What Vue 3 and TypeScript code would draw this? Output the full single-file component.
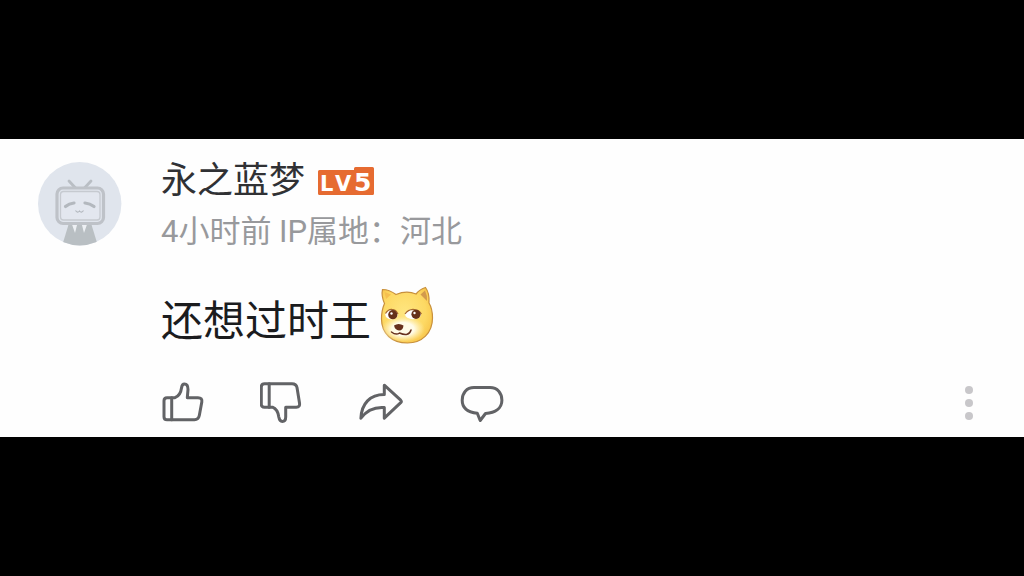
<script setup lang="ts">
interface Action {
  label: string
  paths: string[]
}

const comment = {
  author: '永之蓝梦',
  meta: '4小时前 IP属地：河北',
  text: '还想过时王',
}

const actions: Action[] = [
  {
    label: '点赞',
    paths: [
      'M6 17.7H14C18 16 20 12 20.5 8C20.8 5.5 21.8 4 23.5 4C26 4 27 6.5 27 9.500L26.300 17.700H37C40 17.700 41.300 19.300 40.800 22L38.300 35.500C37.700 38.500 36.500 39.700 33.500 39.700H6C4 39.700 3 38.700 3 36.700V20.700C3 18.700 4 17.700 6 17.700Z',
      'M10.700 17.700V39.700',
    ],
  },
  {
    label: '点踩',
    paths: [
      'M4.500 3.700H32C35 3.700 36.400 4.700 37 7.500L39.500 23C39.900 25.800 39 27.200 36.300 27.200H25.700V37C25.700 40 24.500 41.400 22.300 41.400C20 41.400 19.300 39.800 18.800 37C18 31.500 16 28.500 12.500 27.200H4.500C2.300 27.200 1.300 26.200 1.300 24V7C1.300 4.800 2.300 3.700 4.500 3.700Z',
      'M9.200 3.700V27.200',
    ],
  },
  {
    label: '分享',
    paths: [
      'M25.300 5.200L41.700 20.200Q42.900 21.400 41.700 22.600L25.300 38.200V27.600C15 26.800 8 30 1.900 38.200C2.600 23.500 11 14.500 25.300 14.500Z',
    ],
  },
  {
    label: '回复',
    paths: [
      'M16 7.500H32C39.500 7.500 43.900 13 43.900 20.300C43.900 28 37.500 32.800 27.500 33.500L22.200 40.500L19.300 33.300C9.500 32.300 4.200 27.500 4.200 20.300C4.200 13 8.500 7.500 16 7.500Z',
    ],
  },
]
</script>

<template>
  <main class="page">
    <article class="comment">
      <svg class="avatar" viewBox="0 0 84 84" role="img" aria-label="头像">
        <defs>
          <clipPath id="avatar-clip"><circle cx="41.700" cy="41.700" r="41.700" /></clipPath>
        </defs>
        <circle cx="41.700" cy="41.700" r="41.700" fill="#e0e5ed" />
        <g clip-path="url(#avatar-clip)">
          <path d="M31 61H53L60 84H24Z" fill="#b9bfc3" />
          <path d="M33.500 61H39.500L37 71ZM43.500 61H49.500L46 71Z" fill="#edf0f4" />
          <path d="M31 19L37.500 26M53 19L46.500 26" stroke="#b9bec4" stroke-width="2.800" stroke-linecap="round" />
          <rect x="19" y="26" width="46.500" height="35.500" rx="6" fill="#e0e5ed" stroke="#bec2c8" stroke-width="3.200" />
          <rect x="22.500" y="29.500" width="39.500" height="28.500" rx="3" fill="#e3e7ef" stroke="#c6cad0" stroke-width="1.300" />
          <path d="M27.500 44.500Q31 41.500 36 41M47 41Q52 41.500 56 44.500" fill="none" stroke="#b3b8be" stroke-width="3.200" stroke-linecap="round" />
          <path d="M37.500 48.500Q39.500 51.500 41.500 49Q43.500 51.500 45.500 48.500" fill="none" stroke="#b3b8be" stroke-width="1.200" />
        </g>
      </svg>

      <div class="body">
        <header class="author">
          <span class="name">{{ comment.author }}</span>
          <svg class="level" viewBox="0 0 56 28" role="img" aria-label="LV5">
            <path d="M1.500 3H36V1.500Q36 0 37.500 0H54.500Q56 0 56 1.500V26.500Q56 28 54.500 28H1.500Q0 28 0 26.500V4.500Q0 3 1.500 3Z" fill="#e66b31" />
            <text class="level-text" x="2" y="24">L</text>
            <text class="level-text" x="17" y="24">V</text>
            <text class="level-text level-digit" x="36" y="24">5</text>
          </svg>
        </header>
        <p class="meta">{{ comment.meta }}</p>

        <div class="content">
          <p class="text">{{ comment.text }}</p>
          <svg class="emoji" viewBox="0 0 56 58" role="img" aria-label="doge">
            <defs>
              <radialGradient id="fur" cx="0.450" cy="0.450" r="0.600">
                <stop offset="0" stop-color="#ffe680" />
                <stop offset="0.700" stop-color="#fdd964" />
                <stop offset="1" stop-color="#f8c64c" />
              </radialGradient>
              <radialGradient id="muzzle">
                <stop offset="0.500" stop-color="#fffbe8" />
                <stop offset="1" stop-color="#fff0b8" stop-opacity="0" />
              </radialGradient>
            </defs>
            <path d="M3.500 3.500C8 3.500 13 5.500 17 8.500C23 6 31 5.500 37 8C39.500 5 43 2.500 46.500 1.500C49.500 5.500 50.500 10.500 50 17C52.500 21 53.500 26 53.500 32C53.500 47 43 57 28.500 57C13 57 2.500 47.500 2.500 33C2.500 27.500 3.500 22 5.500 17.500C3.500 13 2.500 8 3.500 3.500Z" fill="url(#fur)" stroke="#c8903c" stroke-width="1.200" />
            <path d="M41.500 8.500L46 4.500Q48.500 9.500 48 15Z" fill="#d39a4c" />
            <path d="M5.500 6L12 8.500L7 13Z" fill="#f6bf50" />
            <ellipse cx="24" cy="43" rx="22" ry="13" fill="url(#muzzle)" />
            <ellipse cx="12.500" cy="28.500" rx="6.200" ry="5" fill="#fff" />
            <ellipse cx="34" cy="28.300" rx="8" ry="5" fill="#fff" />
            <path d="M6.500 27.500Q9 23 13 23.300Q17 23.500 19 28M26 28Q29 23.500 34 23.300Q40 23.500 42.500 28" fill="none" stroke="#a86a2c" stroke-width="1.200" />
            <circle cx="13.800" cy="28.700" r="4.600" fill="#66301a" />
            <circle cx="37" cy="28.300" r="4.600" fill="#66301a" />
            <circle cx="12.500" cy="27.500" r="1.200" fill="#fff" />
            <circle cx="35.500" cy="27" r="1.200" fill="#fff" />
            <path d="M15 39.500Q19.500 36.500 24.500 39.500Q24 44.500 20 44.500Q16 44 15 39.500Z" fill="#67301d" />
            <path d="M12.500 46Q17 49.500 20.500 47Q30 51 32 44" fill="none" stroke="#67301d" stroke-width="1.500" stroke-linecap="round" />
          </svg>
        </div>

        <footer class="toolbar">
          <button v-for="action in actions" :key="action.label" class="action" type="button" :aria-label="action.label">
            <svg class="icon" viewBox="0 0 46 46" aria-hidden="true">
              <path v-for="d in action.paths" :key="d" :d="d" />
            </svg>
          </button>
          <button class="more" type="button" aria-label="更多">
            <svg class="dots" viewBox="0 0 10 46" aria-hidden="true">
              <circle cx="5" cy="10" r="4" />
              <circle cx="5" cy="23" r="4" />
              <circle cx="5" cy="36" r="4" />
            </svg>
          </button>
        </footer>
      </div>
    </article>
  </main>
</template>

<style>
body {
  margin: 0;
  background: #000;
}
</style>

<style scoped>
.page {
  display: flex;
  flex-direction: column;
  justify-content: center;
  min-height: 100vh;
  background: #000;
  font-family: Roboto, "Noto Sans CJK SC", sans-serif;
}

.comment {
  display: flex;
  align-items: flex-start;
  gap: 39px;
  padding: 23px 50px 11px 38px;
  background: #fefefe;
}

.avatar {
  flex: none;
  width: 84px;
  height: 84px;
}

.body {
  flex: 1;
  min-width: 0;
}

.author {
  display: flex;
  align-items: center;
  gap: 13px;
  height: 38px;
}

.name {
  color: #303134;
  font-size: 36px;
  line-height: 36px;
}

.level {
  width: 56px;
  height: 28px;
  overflow: visible;
}

.level-text {
  fill: #fff;
  font-family: "DejaVu Sans", sans-serif;
  font-size: 21px;
  font-weight: 700;
}

.level-digit {
  font-size: 25px;
}

.meta {
  margin: 14px 0 0;
  color: #98999c;
  font-size: 31px;
  line-height: 36px;
}

.content {
  display: flex;
  align-items: flex-end;
  gap: 8px;
  margin-top: 36px;
}

.text {
  margin: 0;
  color: #1b1c1e;
  font-size: 42px;
  line-height: 44px;
}

.emoji {
  width: 56px;
  height: 58px;
}

.toolbar {
  display: flex;
  gap: 53px;
  margin-top: 36px;
}

.action,
.more {
  display: flex;
  padding: 0;
  border: 0;
  background: none;
  cursor: pointer;
}

.more {
  margin-left: auto;
}

.icon {
  width: 46px;
  height: 46px;
  fill: none;
  stroke: #626366;
  stroke-width: 3;
  stroke-linejoin: round;
  stroke-linecap: round;
}

.dots {
  width: 10px;
  height: 46px;
  fill: #c8c7ca;
}
</style>
